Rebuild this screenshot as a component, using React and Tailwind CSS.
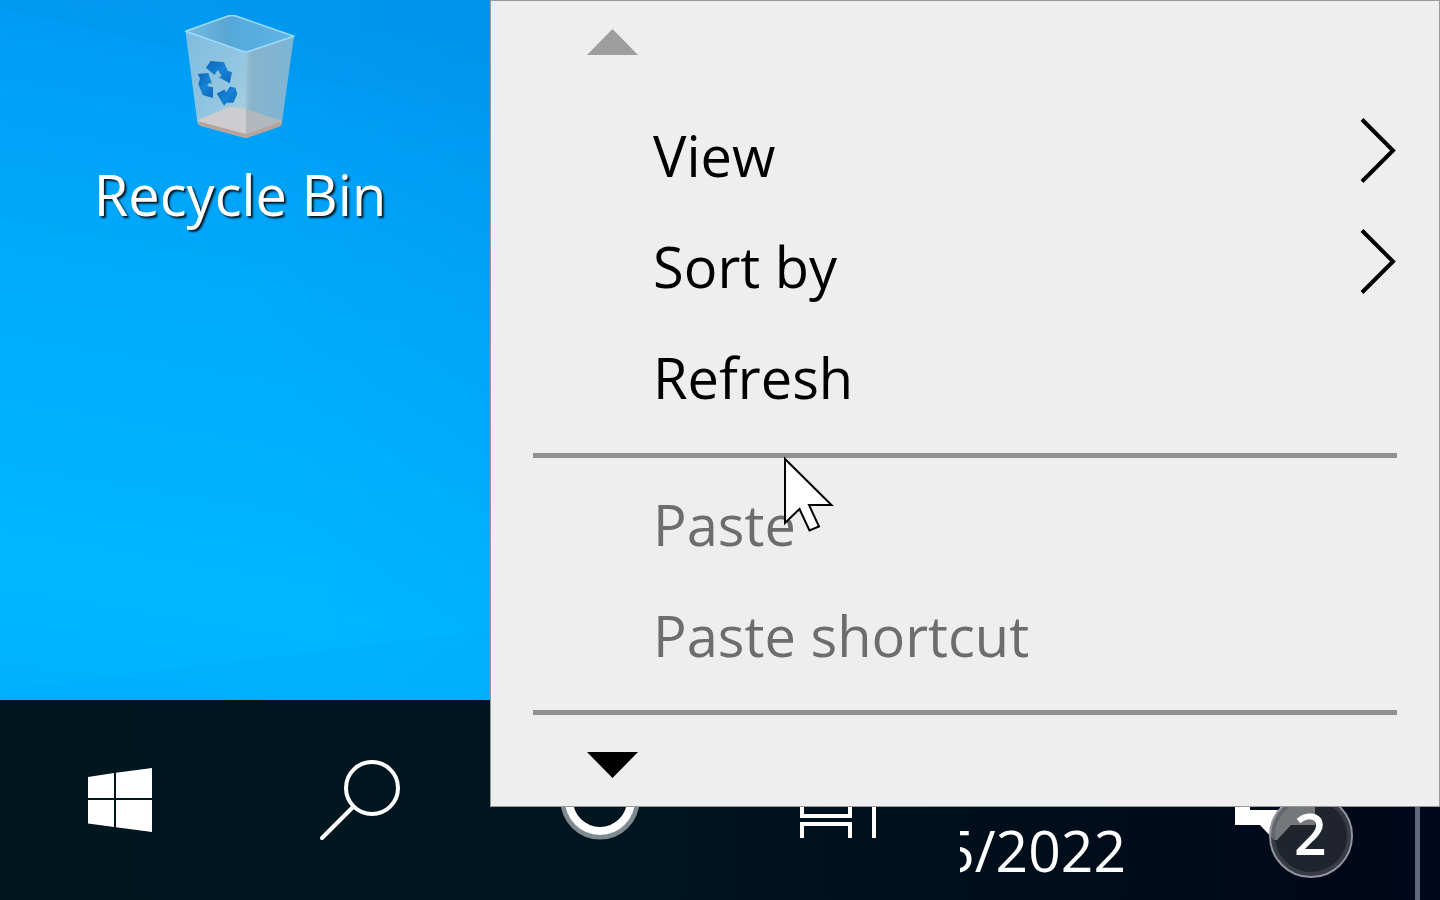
const menuItem =
  'flex h-[111px] w-full items-center pl-[162px] pr-10 text-left text-[56px] leading-none disabled:text-[#6d6d6d]';

function RecycleBinIcon() {
  return (
    <svg width="112" height="126" viewBox="0 0 112 126" aria-hidden="true">
      <defs>
        <linearGradient id="inside" x1="0" x2="1">
          <stop offset="0" stopColor="#73bbe4" />
          <stop offset=".38" stopColor="#5ba6d2" />
          <stop offset=".44" stopColor="#55aadb" />
          <stop offset="1" stopColor="#5fb3e6" />
        </linearGradient>
        <linearGradient id="front" x1="0" x2="1" y1="0" y2="1">
          <stop offset="0" stopColor="#7fbce0" />
          <stop offset=".6" stopColor="#93c6e0" />
          <stop offset="1" stopColor="#b4d2df" />
        </linearGradient>
        <linearGradient id="side" x1="0" x2="1">
          <stop offset="0" stopColor="#a2c4d6" />
          <stop offset=".12" stopColor="#88b4cc" />
          <stop offset="1" stopColor="#7cb5d6" />
        </linearGradient>
        <linearGradient id="arrows" x1="0" x2="1" y1="0" y2="1">
          <stop offset="0" stopColor="#0d62b8" />
          <stop offset=".5" stopColor="#1683d4" />
          <stop offset="1" stopColor="#0f68bd" />
        </linearGradient>
      </defs>
      <path d="M2 17.300 L44 2 Q48 .8 52 2 L110 22.300 L66 37 Q62 38.500 58 37Z" fill="url(#inside)" />
      <path d="M1.500 17.300 L58 37 L62.500 38 L62 123.500 Q59 123.500 56 122.500 L17 112 Q14 111 13.300 108Z" fill="url(#front)" />
      <path d="M62 38 L66 37 L110 22.300 L98 108 Q97.500 112 94 113 L67 122.500 Q64 124 61 123.500Z" fill="url(#side)" />
      <path d="M14 106 L40 95 Q46 92 51 93 L62 95 V121 L14 109Z" fill="#cdcccf" />
      <path d="M62 95 L98 107 V109 L62 121Z" fill="#b3b7be" />
      <path d="M13.500 107 L58 119 Q62 120.500 66 119 L98 107.500 L97 112 L67 122.500 Q62 124.500 56 122.500 L16 111.500Z" fill="#b9a29b" />
      <path d="M1.500 17.300 L44 2 Q48 .8 52 2 L110 22.300 L66 37 Q62 38.500 58 37Z" fill="none" stroke="#9ddcfa" strokeWidth="1.500" strokeLinejoin="round" />
      <g fill="url(#arrows)">
        <path d="M22 53.700 L26.700 47 L40 48.300 L43.700 56.700 L48 58.300 L45.700 69.300 L34.700 63.300 L37.700 62 L33.700 56 L30.500 61Z" />
        <path d="M13.700 60 L24.300 59 L28 70 L25.300 68.700 L23 72 L29 73.300 V84 L18.700 81 L14.300 70 L16 64.500Z" />
        <path d="M32.700 79.500 L40.500 75.500 L42 78.500 L46 72.500 L51.500 74 L53.300 80 L49.300 88.700 L42.700 88.700 L40 91.700Z" />
      </g>
    </svg>
  );
}

function Chevron() {
  return (
    <svg className="ml-auto mb-2" width="40" height="66" viewBox="0 0 40 66" aria-hidden="true">
      <path d="M3 1.500 L34 32.500 L3 63.500" fill="none" stroke="#000" strokeWidth="4" />
    </svg>
  );
}

function Separator() {
  return <hr className="mx-[42px] h-[5px] border-0 bg-[#919191]" />;
}

function Wallpaper() {
  return (
    <svg className="absolute inset-y-0 left-0 h-full w-[490px]" viewBox="0 0 490 700" preserveAspectRatio="none" aria-hidden="true">
      <defs>
        <linearGradient id="sky" x1=".56" y1="0" x2=".44" y2="1">
          <stop offset="0" stopColor="#0098f2" />
          <stop offset=".2" stopColor="#00a1f8" />
          <stop offset=".42" stopColor="#00aafc" />
          <stop offset=".65" stopColor="#00b1fe" />
          <stop offset=".85" stopColor="#00b7ff" />
          <stop offset="1" stopColor="#00b3ff" />
        </linearGradient>
        <linearGradient id="shade" x1="0" x2="1" y1=".3" y2="0">
          <stop offset=".45" stopColor="#0078d8" stopOpacity="0" />
          <stop offset="1" stopColor="#0078d8" stopOpacity=".12" />
        </linearGradient>
      </defs>
      <rect width="490" height="700" fill="url(#sky)" />
      <rect width="490" height="700" fill="url(#shade)" />
      <path d="M0 8 L290 75 L490 112 V0 H0Z" fill="#0080e0" fillOpacity=".06" />
      <path d="M490 630 L0 690 V700 H490Z" fill="#0090f0" fillOpacity=".05" />
    </svg>
  );
}

export default function App() {
  return (
    <main className="relative flex min-h-screen flex-col overflow-hidden bg-[#001520] font-['Open_Sans','Noto_Sans',sans-serif] text-black">
      <section className="relative flex-1 overflow-hidden bg-[#00a8fa]">
        <Wallpaper />
        <button type="button" className="relative flex w-[480px] flex-col items-center pt-[14px] text-[56px] leading-[76px] text-white">
          <RecycleBinIcon />
          <span className="mt-4 [text-shadow:2px_2px_2px_rgb(0_0_0/0.85)]">Recycle Bin</span>
        </button>
      </section>

      <footer className="flex h-[200px] items-center bg-[linear-gradient(90deg,#001720_0%,#001520_45%,#000e1b_70%,#00071a_100%)] text-white">
        <button type="button" aria-label="Start" className="flex w-60 justify-center">
          <svg width="64" height="64" viewBox="0 0 64 64" fill="#fff" aria-hidden="true">
            <path d="M0 9 L26 5 V30 H0Z M28 4.700 L64 0 V30 H28Z M0 32 H26 V59 L0 55.500Z M28 32 H64 V64 L28 59.300Z" />
          </svg>
        </button>
        <button type="button" aria-label="Search" className="flex w-60 justify-center">
          <svg width="80" height="80" viewBox="0 0 80 80" fill="none" stroke="#fff" strokeWidth="4" aria-hidden="true">
            <circle cx="52" cy="28" r="26" />
            <path d="M33 47 L2 78" strokeLinecap="round" />
          </svg>
        </button>
        <button type="button" aria-label="Cortana" className="flex w-60 justify-center">
          <svg width="80" height="80" viewBox="0 0 80 80" fill="none" aria-hidden="true">
            <circle cx="40" cy="40" r="37" stroke="#7f8b91" strokeWidth="5" />
            <circle cx="40" cy="40" r="31" stroke="#fff" strokeWidth="8" />
          </svg>
        </button>
        <button type="button" aria-label="Task View" className="flex w-60 justify-center">
          <svg width="80" height="76" viewBox="0 0 80 76" fill="none" stroke="#fff" strokeWidth="4" aria-hidden="true">
            <path d="M2 0 V14 M50 0 V14 M2 24 V54 H50 V24Z M2 76 V62 H50 V76 M74 0 V76" />
          </svg>
        </button>
        <time className="flex w-[166px] justify-end self-end overflow-hidden pb-[10px] text-[57px] leading-[80px]">2/15/2022</time>
        <button type="button" aria-label="2 notifications" className="relative ml-[108px] h-[156px] w-[120px] self-end">
          <svg width="120" height="156" viewBox="0 0 120 156" aria-hidden="true">
            <path fillRule="evenodd" d="M1 20 H81 V81 H57 L43 96 H40 L26 81 H1Z M16 34 H46 V66 H16Z" fill="#fff" />
            <circle cx="77" cy="92" r="41" fill="#303236" fillOpacity=".66" />
            <circle cx="77" cy="92" r="38" fill="none" stroke="#50535d" strokeWidth="4" strokeOpacity=".5" />
            <circle cx="77" cy="92" r="41" fill="none" stroke="#9294a0" strokeWidth="2" />
          </svg>
          <span className="absolute left-[60px] top-[61px] text-[57px] font-semibold leading-[57px]">2</span>
        </button>
        <div className="ml-auto mr-5 h-full w-[5px] bg-[#606879]" />
      </footer>

      <div role="menu" className="absolute left-[490px] right-0 top-0 h-[807px] border border-[#999] bg-[#eee]">
        <div className="flex h-[98px] pl-24 pt-7">
          <svg width="51" height="26" viewBox="0 0 51 26" aria-hidden="true"><path d="M0 26 L25.500 0 L51 26Z" fill="#9e9e9e" /></svg>
        </div>
        <button type="button" role="menuitem" className={menuItem}>View<Chevron /></button>
        <button type="button" role="menuitem" className={menuItem}>Sort by<Chevron /></button>
        <button type="button" role="menuitem" className={menuItem}>Refresh</button>
        <div className="h-[21px]" />
        <Separator />
        <div className="h-[10px]" />
        <button type="button" role="menuitem" disabled className={menuItem}>Paste</button>
        <button type="button" role="menuitem" disabled className={menuItem}>Paste shortcut</button>
        <div className="h-[20px]" />
        <Separator />
        <div className="flex pl-24 pt-[37px]">
          <svg width="51" height="26" viewBox="0 0 51 26" aria-hidden="true"><path d="M0 0 L25.500 26 L51 0Z" fill="#000" /></svg>
        </div>
      </div>

      <svg className="pointer-events-none absolute left-[783px] top-[456px]" width="52" height="78" viewBox="0 0 52 78" aria-hidden="true">
        <path d="M2 3 V67 L16.500 53 L26.500 74.500 L36 70.500 L26 49 H48.500Z" fill="#fff" stroke="#000" strokeWidth="2" />
      </svg>
    </main>
  );
}
